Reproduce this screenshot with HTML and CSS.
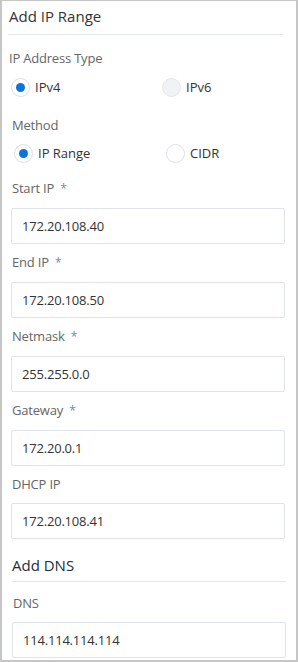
FILE: index.html
```html
<!DOCTYPE html>
<html lang="en">
<head>
  <meta charset="UTF-8" />
  <title>Add IP Range</title>
  <link rel="stylesheet" href="styles.css">
</head>
<body>
  <div class="panel">
    <h2 class="section-title">Add IP Range</h2>

    <div class="group">
      <div class="group-label">IP Address Type</div>
      <div class="radios">
        <label class="radio checked"><span class="dot"></span>IPv4</label>
        <label class="radio disabled"><span class="dot"></span>IPv6</label>
      </div>
    </div>

    <div class="group method">
      <div class="group-label">Method</div>
      <div class="radios">
        <label class="radio checked"><span class="dot"></span>IP Range</label>
        <label class="radio"><span class="dot"></span>CIDR</label>
      </div>
    </div>

    <div class="fields">
      <div class="field">
        <label>Start IP <span class="req">*</span></label>
        <input type="text" value="172.20.108.40">
      </div>
      <div class="field">
        <label>End IP <span class="req">*</span></label>
        <input type="text" value="172.20.108.50">
      </div>
      <div class="field">
        <label>Netmask <span class="req">*</span></label>
        <input type="text" value="255.255.0.0">
      </div>
      <div class="field">
        <label>Gateway <span class="req">*</span></label>
        <input type="text" value="172.20.0.1">
      </div>
      <div class="field">
        <label>DHCP IP</label>
        <input type="text" value="172.20.108.41">
      </div>
    </div>

    <div class="dns">
      <h2 class="section-title">Add DNS</h2>
      <div class="field">
        <label>DNS</label>
        <input type="text" value="114.114.114.114">
      </div>
    </div>
  </div>
</body>
</html>
```

FILE: styles.css
```css
html, body {
  margin: 0;
  padding: 0;
  background: #fff;
}
body {
  font-family: 'Open Sans', 'Noto Sans', sans-serif;
  font-size: 13px;
  color: #333;
}
.panel {
  width: 298px;
  height: 662px;
  box-sizing: border-box;
  border: 2px solid #c6c6c6;
  border-top-width: 1px;
  padding: 0 13px 0 6px;
  overflow: hidden;
}
.section-title {
  margin: 0;
  padding: 5px 0 8px 1px;
  font-size: 15px;
  font-weight: normal;
  line-height: 20px;
  color: #333;
  border-bottom: 1px solid #e4e8ee;
}
.group {
  padding-left: 1px;
}
.group-label {
  margin-top: 13px;
  line-height: 20px;
  color: #666;
  letter-spacing: -0.2px;
}
.radios {
  display: flex;
  margin-top: 9px;
  height: 20px;
}
.radio {
  display: flex;
  align-items: center;
  flex: 0 0 151px;
  padding-left: 2px;
  box-sizing: border-box;
  color: #333;
}
.radio .dot {
  flex: 0 0 auto;
  width: 19px;
  height: 19px;
  box-sizing: border-box;
  border: 1px solid #dcdfe6;
  border-radius: 50%;
  margin-right: 5px;
  position: relative;
}
.radio.checked .dot::after {
  content: "";
  position: absolute;
  left: 4px;
  top: 4px;
  width: 9px;
  height: 9px;
  border-radius: 50%;
  background: #0b74de;
}
.radio.disabled .dot {
  background: #f0f2f5;
  border-color: #e4e7ed;
}
.method {
  padding-left: 4px;
}
.method .group-label {
  margin-top: 18px;
}
.method .radios {
  margin-top: 8px;
}
.method .radio {
  flex-basis: 152px;
}
.fields {
  margin: 15px -2px 0 3px;
}
.field {
  margin-bottom: 8px;
}
.field label {
  display: block;
  padding-left: 1px;
  line-height: 20px;
  margin-bottom: 9px;
  color: #666;
  letter-spacing: -0.2px;
}
.req {
  color: #7088b0;
  margin-left: 3px;
  font-size: 12px;
}
.field input {
  display: block;
  width: 100%;
  height: 36px;
  box-sizing: border-box;
  border: 1px solid #dfe3e8;
  border-radius: 2px;
  padding: 0 10px;
  font-family: inherit;
  font-size: 13px;
  color: #333;
  outline: none;
  letter-spacing: -0.2px;
}
.dns {
  margin: 16px -3px 0 4px;
}
.dns .section-title {
  padding: 0 0 6px 0;
  color: #1f2d3d;
}
.dns .field label {
  margin-top: 11px;
}
```
